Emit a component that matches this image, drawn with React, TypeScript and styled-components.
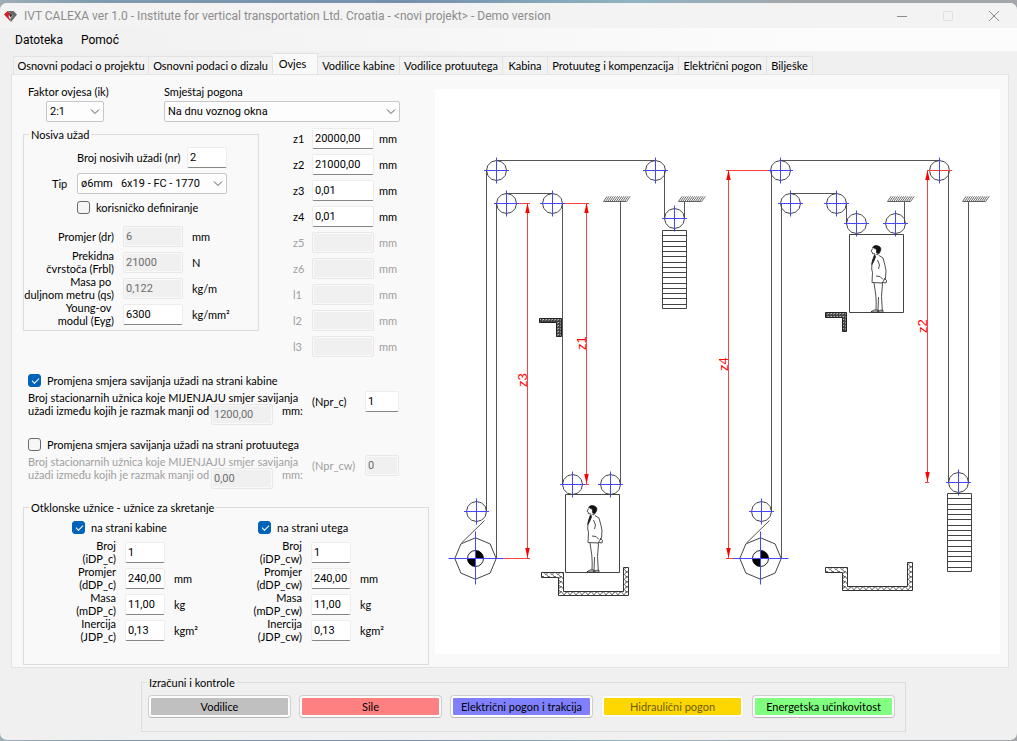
import React, { useState } from "react";
import styled, { createGlobalStyle } from "styled-components";

const GlobalStyle = createGlobalStyle`
  * { box-sizing: border-box; }
  html, body { margin: 0; }
  body {
    font: 11px/13px Lato, "Liberation Sans", Arial, sans-serif;
    color: #000;
    background: #3c5468;
  }
  button { font: inherit; color: inherit; }
  input, select { font: 11px/13px Roboto, "Liberation Sans", Arial, sans-serif; color: inherit; }
`;

const Desktop = styled.div`
  min-height: 100vh;
  display: flex;
  flex-direction: column;
  padding: 3px 0 1px;
  background: linear-gradient(90deg, #9fadb6, #7e9bb0 10%, #7590ab 40%, #8fb3c2 62%, #a3a7ac 78%, #a3a7ac);
`;

const Window = styled.main`
  flex: 1;
  display: flex;
  flex-direction: column;
  background: #f0f0f0;
  border-radius: 7px;
  overflow: hidden;
`;

const TitleBar = styled.header`
  display: flex;
  align-items: center;
  height: 25px;
  padding: 0 0 0 4px;
  background: #f3f3f3;
  color: #8c8c8c;
`;

const Title = styled.h1`
  flex: 1;
  margin: 0 0 0 7px;
  font: 12px/16px Roboto, sans-serif;
  white-space: nowrap;
`;

const CaptionButton = styled.button<{ $faded?: boolean }>`
  width: 46px;
  height: 25px;
  padding: 0;
  border: 0;
  background: none;
  color: ${(p) => (p.$faded ? "#dedede" : "#8a8a8a")};
  svg { display: block; margin: 0 auto; }
`;

const MenuBar = styled.nav`
  display: flex;
  align-items: center;
  gap: 18px;
  height: 23px;
  padding-left: 15px;
  background: linear-gradient(90deg, #f0f0f0, #fcfcfc 80%);
`;

const MenuItem = styled.button`
  padding: 0;
  border: 0;
  background: none;
  font: 12px/16px Roboto, sans-serif;
`;

const TabStrip = styled.div`
  display: flex;
  align-items: flex-end;
  height: 23px;
  padding-left: 13px;
`;

const Tab = styled.button<{ $active?: boolean; $width: number }>`
  width: ${(p) => p.$width}px;
  height: ${(p) => (p.$active ? 21 : 18)}px;
  padding: ${(p) => (p.$active ? "0 5px 2px 0" : "0")};
  border: 1px solid #e3e3e3;
  border-bottom: 0;
  border-left-width: ${(p) => (p.$active ? 0 : 1)}px;
  background: ${(p) => (p.$active ? "#f9f9f9" : "#f2f2f2")};
  white-space: nowrap;
  & + & { border-left: 0; }
`;

const TabPage = styled.section`
  display: flex;
  align-items: flex-start;
  margin: 0 8px 0 11px;
  border: 1px solid #e3e3e3;
  background: #f9f9f9;
`;

const Form = styled.form`
  flex: none;
  width: 423px;
  padding: 10px 6px 2px 11px;
`;

const Figure = styled.figure`
  flex: 1;
  margin: 14px 8px 12px 0;
  background: #fff;
  svg { display: block; width: 100%; height: auto; }
`;

const DriveRow = styled.div`
  display: grid;
  grid-template-columns: 136px 236px;
  height: 40px;
  padding-left: 5px;
`;

const StackField = styled.div<{ $indent?: number }>`
  display: grid;
  grid-template-rows: 16px 21px;
  > label { line-height: 14px; }
  > span { margin-left: ${(p) => p.$indent ?? 0}px; }
`;

const SelectWrap = styled.span`
  position: relative;
  display: block;
  width: fit-content;
  svg { position: absolute; right: 4px; top: 7px; pointer-events: none; }
`;

const Select = styled.select<{ $width: number }>`
  appearance: none;
  display: block;
  width: ${(p) => p.$width}px;
  height: 21px;
  padding: 0 3px;
  border: 1px solid #c8c8c8;
  border-radius: 2px;
  background: #fdfdfd;
`;

const Input = styled.input<{ $width: number }>`
  width: ${(p) => p.$width}px;
  height: 21px;
  padding: 0 2px;
  border: 1px solid #ececec;
  border-bottom-color: #868686;
  border-radius: 2px;
  background: #fff;
  &:disabled {
    border-color: #e8e8e8;
    background: #f0f0f0;
    box-shadow: inset 0 0 0 1px #f9f9f9;
    color: #6d6d6d;
  }
`;

const Group = styled.fieldset<{ $width?: number }>`
  width: ${(p) => (p.$width ? `${p.$width}px` : "auto")};
  min-width: 0;
  margin: 0;
  padding: 0;
  border: 1px solid #dcdcdc;
`;

const Legend = styled.legend`
  margin-left: 5px;
  padding: 0 2px;
`;

const RopeRow = styled.div`
  display: flex;
  gap: 34px;
`;

const RopeGroup = styled(Group)`
  height: 203px;
  margin-top: 3px;
`;

const RopeLine = styled.div`
  display: grid;
  grid-template-columns: 53px 1fr;
  align-items: center;
  height: 26px;
  > label:first-child { padding-left: 28px; }
`;

const CountLine = styled.div`
  display: grid;
  grid-template-columns: 110px 40px;
  align-items: center;
  height: 26px;
  padding-left: 53px;
  margin-top: 3px;
`;

const CheckLine = styled.div<{ $left?: number }>`
  display: flex;
  align-items: center;
  gap: 6px;
  height: 22px;
  padding-left: ${(p) => p.$left ?? 0}px;
`;

const CheckBox = styled.input`
  appearance: none;
  width: 13px;
  height: 13px;
  margin: 0;
  border: 1px solid #6a6a6a;
  border-radius: 3px;
  background: #f6f6f6;
  &:checked {
    border-color: #0062b8;
    background: #0062b8;
  }
  &:checked::after {
    content: "";
    display: block;
    width: 6px;
    height: 3px;
    margin: 3px 0 0 3px;
    border: solid #fff;
    border-width: 0 0 1px 1px;
    transform: rotate(-45deg);
  }
`;

const ParamList = styled.div<{ $label: number; $input: number }>`
  display: grid;
  grid-template-columns: ${(p) => p.$label}px ${(p) => p.$input}px 1fr;
  grid-auto-rows: 26px;
  align-items: center;
  column-gap: 9px;
  label { text-align: right; white-space: pre; }
`;

const RopeParams = styled(ParamList)`
  margin-top: 5px;
`;

const DeflectorParams = styled(ParamList)`
  margin-top: 1px;
`;

const DimensionList = styled.div`
  display: grid;
  grid-template-columns: 19px 62px auto;
  grid-auto-rows: 26px;
  align-items: center;
`;

const Unit = styled.span<{ $dim?: boolean }>`
  padding-left: 5px;
  color: ${(p) => (p.$dim ? "#a0a0a0" : "inherit")};
`;

const Label = styled.label<{ $dim?: boolean }>`
  color: ${(p) => (p.$dim ? "#a0a0a0" : "inherit")};
  white-space: nowrap;
`;

const BendBlock = styled.section`
  height: 64px;
  padding-left: 5px;
`;

const BendArea = styled.div`
  margin-top: 10px;
  height: 132px;
`;

const BendRow = styled.div<{ $dim?: boolean }>`
  display: grid;
  grid-template-columns: 284px 53px 34px;
  align-items: start;
  color: ${(p) => (p.$dim ? "#a0a0a0" : "inherit")};
  > label { line-height: 21px; }
`;

const BendLine = styled.div`
  display: grid;
  grid-template-columns: 183px 71px auto;
  height: 13px;
  white-space: nowrap;
`;

const DeflectorGroup = styled(Group)`
  height: 164px;
`;

const DeflectorColumns = styled.div`
  display: grid;
  grid-template-columns: 186px 1fr;
  margin-top: 2px;
`;

const Actions = styled(Group)`
  display: block;
  width: 765px;
  height: 56px;
  margin: 8px 0 8px 141px;
`;

const ActionRow = styled.div`
  display: grid;
  grid-template-columns: repeat(5, 1fr);
  gap: 8px;
  padding: 6px 10px 0 6px;
`;

const ActionButton = styled.button<{ $fill: string }>`
  height: 23px;
  padding: 2px;
  border: 1px solid #cfcfcf;
  border-bottom-color: #b8b8b8;
  border-radius: 4px;
  background: linear-gradient(${(p) => p.$fill}, ${(p) => p.$fill}) content-box, #fdfdfd;
  &:disabled { border-color: #ececec; color: #6b5a00; }
`;

const Chevron = () => (
  <svg width="10" height="7" viewBox="0 0 10 7" fill="none" stroke="#555" aria-hidden="true">
    <path d="M1 1.5 5 5.5 9 1.5" />
  </svg>
);

const Picker = ({ id, width, value }: { id: string; width: number; value: string }) => (
  <SelectWrap>
    <Select id={id} $width={width} defaultValue={value}>
      <option>{value}</option>
    </Select>
    <Chevron />
  </SelectWrap>
);

const Check = ({ id, text, on, left }: { id: string; text: string; on?: boolean; left?: number }) => (
  <CheckLine $left={left}>
    <CheckBox id={id} type="checkbox" defaultChecked={on} />
    <Label htmlFor={id}>{text}</Label>
  </CheckLine>
);

type Param = { id: string; label: string; value: string; unit?: string; off?: boolean };

const Params = ({ rows, width }: { rows: Param[]; width: number }) => (
  <>
    {rows.map((r) => (
      <React.Fragment key={r.id}>
        <label htmlFor={r.id}>{r.label}</label>
        <Input id={r.id} $width={width} defaultValue={r.value} disabled={r.off} />
        <span>{r.unit}</span>
      </React.Fragment>
    ))}
  </>
);

const ropeParams: Param[] = [
  { id: "dr", label: "Promjer (dr)", value: "6", unit: "mm", off: true },
  { id: "frbl", label: "Prekidna\nčvrstoča (Frbl)", value: "21000", unit: "N", off: true },
  { id: "qs", label: "Masa po\u00a0\nduljnom metru (qs)", value: "0,122", unit: "kg/m", off: true },
  { id: "eyg", label: "Young-ov\u00a0\nmodul (Eyg)", value: "6300", unit: "kg/mm²" },
];

const deflectorParams = (side: string): Param[] => [
  { id: `idp_${side}`, label: `Broj\n(iDP_${side})`, value: "1" },
  { id: `ddp_${side}`, label: `Promjer\n(dDP_${side})`, value: "240,00", unit: "mm" },
  { id: `mdp_${side}`, label: `Masa\n(mDP_${side})`, value: "11,00", unit: "kg" },
  { id: `jdp_${side}`, label: `Inercija\n(JDP_${side})`, value: "0,13", unit: "kgm²" },
];

const dimensions: [string, string][] = [
  ["z1", "20000,00"], ["z2", "21000,00"], ["z3", "0,01"], ["z4", "0,01"],
  ["z5", ""], ["z6", ""], ["l1", ""], ["l2", ""], ["l3", ""],
];

const tabs: [string, number][] = [
  ["Osnovni podaci o projektu", 136], ["Osnovni podaci o dizalu", 124], ["Ovjes", 45],
  ["Vodilice kabine", 82], ["Vodilice protuutega", 103], ["Kabina", 45],
  ["Protuuteg i kompenzacija", 131], ["Električni pogon", 88], ["Bilješke", 46],
];

const actions: [string, string, boolean][] = [
  ["Vodilice", "#c0c0c0", false], ["Sile", "#ff8080", false],
  ["Električni pogon i trakcija", "#8080ff", false], ["Hidraulični pogon", "#ffd700", true],
  ["Energetska učinkovitost", "#80ff80", false],
];

const ring = (x: number, y: number, r: number, n: number) =>
  Array.from({ length: n }, (_, i) => {
    const a = (i * 2 * Math.PI) / n;
    return `${(x + r * Math.cos(a)).toFixed(1)},${(y + r * Math.sin(a)).toFixed(1)}`;
  }).join(" ");

const Pulley = ({ x, y, axis = "#4646ff" }: { x: number; y: number; axis?: string }) => (
  <g>
    <polygon points={ring(x, y, 10, 12)} stroke="#444" />
    <path d={`M${x - 12.5} ${y}h25`} stroke={axis} />
    <path d={`M${x} ${y - 13}v26`} stroke="#4646ff" />
  </g>
);

const Machine = ({ x, y }: { x: number; y: number }) => (
  <g>
    <polygon points={ring(x, y, 20.7, 8)} stroke="#444" />
    <circle cx={x} cy={y} r="8" stroke="#222" />
    <path d={`M${x} ${y}v-8a8 8 0 0 1 8 8zM${x} ${y}v8a8 8 0 0 1 -8 -8z`} fill="#000" stroke="none" />
    <path d={`M${x - 27} ${y}h55M${x} ${y - 27}v53`} stroke="#4646ff" />
    <path d={`M${x - 14} ${y - 15.5}l23 -22.5`} stroke="#555" />
    <Pulley x={x + 1} y={y - 47} />
  </g>
);

const Weight = ({ x, y }: { x: number; y: number }) => (
  <path
    stroke="#444"
    d={`M${x} ${y}h24v78h-24z` + Array.from({ length: 14 }, (_, i) => `M${x} ${y + Math.round((i + 1) * 5.25)}h24`).join("")}
  />
);

const Anchor = ({ x, y }: { x: number; y: number }) => (
  <path
    stroke="#444"
    strokeWidth="0.8"
    d={`M${x} ${y}h23` + Array.from({ length: 12 }, (_, i) => `M${x + i * 2.1} ${y}l3.6 -5.2`).join("")}
  />
);

const Dimension = ({ x, top, bottom, label, labelY }: { x: number; top: number; bottom: number; label: string; labelY: number }) => (
  <g>
    <path d={`M${x} ${top}V${bottom}`} stroke="#ff4040" />
    <path d={`M${x} ${top}l2.2 10h-4.4zM${x} ${bottom}l2.2 -10h-4.4z`} fill="#f00" stroke="none" />
    <text x={x} y={labelY} transform={`rotate(-90 ${x} ${labelY})`} dy="-1" textAnchor="middle" fill="#f00" stroke="none" fontSize="13">
      {label}
    </text>
  </g>
);

const Passenger = () => (
  <g stroke="#222" strokeWidth="0.8">
    <path d="M588.6 507.5c1-1.8 3-2.2 5-1.7 2.300.6 3.600 2 3.200 4-.3 1.700-1.300 2.800-2.200 4.200l-2.200-1.500.2-2.500-1.500-1.500z" fill="#111" />
    <path d="M588.5 508.5l-1.300 2.800 1 .7.2 1.600 2.500.2M592 514l2.300 1" />
    <path d="M590.8 514.5l-2.300 6-.6 4 1.500-2.500 2.100-5z" fill="#111" />
    <path d="M590.5 515l-2.500 8-.3 6 .8 3.500-.5 10 10.500.5M595 515.500l4 2.500 2 7.500 1 5-.5 7.500-2.500 3.500-1 2M593.500 520l2 5-1 4M592 536l4 .5 3 3M600 538l2.500 2.500-.5 2.500-3-.5" />
    <path d="M590 543l1.800 12 .4 8-.2 7.500M594.500 557l-.5 14M598.500 543.500l-1 13 .8 14" />
    <path d="M587 571.800l3-1.800h4v2zM593.500 571.800l2.500-1.500h3v1.800z" />
  </g>
);

const Car = () => (
  <g>
    <path d="M565.5 494.5h54v78h-54z" stroke="#444" />
    <Passenger />
  </g>
);

const Pit = () => (
  <path
    fill="url(#concrete)"
    stroke="#333"
    d="M541.5 572.5h22v19h60v-24h5v28h-70v-18h-17z"
  />
);

const Scheme = () => (
  <svg viewBox="435 89 565 565" fill="none" fontFamily="Liberation Sans, Arial, sans-serif" role="img" aria-label="Shema ovjesa">
    <defs>
      <pattern id="concrete" width="6" height="5" patternUnits="userSpaceOnUse">
        <path d="M0 5l3-4 3 4M1 0l2 3" fill="none" stroke="#444" strokeWidth="0.8" />
      </pattern>
      <pattern id="slab" width="3" height="3" patternUnits="userSpaceOnUse">
        <rect width="3" height="3" fill="#444" />
        <path d="M0 2l1-1M2 2h1" stroke="#ddd" strokeWidth="0.8" />
      </pattern>
    </defs>

    <g stroke="#555">
      <path d="M496.5 160.5H655M486.5 170V512M664.5 170V218M506.5 193.5H552.5M496.5 203V558M562.5 203V484M620.5 202V484M684.5 202V218" />
      <path d="M780.5 160.5H939M771.5 170V512M948.5 170V482M790.5 193.5H836.5M781.5 203V558M846.5 203V224M904.5 202V224M968.5 202V482" />
    </g>
    <g stroke="#ff4040">
      <path d="M516 203.5H530M562 203.5H589M503 558.5H530M582 484.5H589" />
      <path d="M726 170.5H768M726 558.5H735M925 482.5H929" />
    </g>
    <Dimension x={527.5} top={203} bottom={558} label="z3" labelY={380} />
    <Dimension x={586.5} top={203} bottom={484} label="z1" labelY={343} />
    <Dimension x={728.5} top={170} bottom={558} label="z4" labelY={364} />
    <Dimension x={927.5} top={170} bottom={482} label="z2" labelY={326} />

    <Pulley x={496.5} y={170.5} />
    <Pulley x={655.5} y={170.5} />
    <Pulley x={506.5} y={203.5} />
    <Pulley x={552.5} y={203.5} />
    <Pulley x={674.5} y={218.5} />
    <Pulley x={572.5} y={484.5} />
    <Pulley x={610.5} y={484.5} />
    <Machine x={475.5} y={558.5} />
    <Anchor x={603.5} y={201.5} />
    <Anchor x={678.5} y={201.5} />
    <Weight x={662.5} y={230.5} />
    <path d="M539.5 318.5h22v18h-5v-14h-17z" fill="url(#slab)" stroke="#222" />
    <Car />
    <Pit />

    <Pulley x={780.5} y={170.5} />
    <Pulley x={939.5} y={170.5} axis="#ff4040" />
    <Pulley x={790.5} y={203.5} />
    <Pulley x={836.5} y={203.5} />
    <Pulley x={856.5} y={223.5} />
    <Pulley x={895.5} y={223.5} />
    <Pulley x={958.5} y={482.5} />
    <Machine x={760.5} y={558.5} />
    <Anchor x={887.5} y={201.5} />
    <Anchor x={962.5} y={201.5} />
    <Weight x={947.5} y={493.5} />
    <path d="M825.5 312.5h21v19h-4v-14h-17z" fill="url(#slab)" stroke="#222" />
    <g transform="translate(284 -260)"><Car /></g>
    <g transform="translate(284 -5)"><Pit /></g>
  </svg>
);

const Bend = ({ side, on, title, limit, count }: { side: string; on: boolean; title: string; limit: string; count: string }) => (
  <BendBlock>
    <Check id={`bend_${side}`} text={title} on={on} />
    <BendRow $dim={!on}>
      <div>
        <BendLine>Broj stacionarnih užnica koje MIJENJAJU smjer savijanja</BendLine>
        <BendLine>
          <label htmlFor={`limit_${side}`}>užadi između kojih je razmak manji od</label>
          <Input id={`limit_${side}`} $width={62} defaultValue={limit} disabled />
          <span>mm:</span>
        </BendLine>
      </div>
      <label htmlFor={`npr_${side}`}>(Npr_{side})</label>
      <Input id={`npr_${side}`} $width={34} defaultValue={count} disabled={!on} />
    </BendRow>
  </BendBlock>
);

export default function App() {
  const [active, setActive] = useState(2);
  return (
    <Desktop>
      <GlobalStyle />
      <Window>
        <TitleBar>
          <svg width="13" height="12" viewBox="0 0 13 12" aria-hidden="true">
            <path d="M0 4.5 3.5 1 6.5 3.5 4.5 6 7 12z" fill="#d5202c" />
            <path d="M3.5 1h6L13 4.5 7 12 6 9 9 5.5 6.5 3.5z" fill="#6a6a6a" />
            <path d="M5 4.5 7 3.5 8.5 5.5 6.5 7.5z" fill="#333" />
          </svg>
          <Title>IVT CALEXA ver 1.0 - Institute for vertical transportation Ltd. Croatia - &lt;novi projekt&gt; - Demo version</Title>
          <CaptionButton type="button" aria-label="Minimize">
            <svg width="10" height="10" stroke="currentColor"><path d="M0 5.5h10" /></svg>
          </CaptionButton>
          <CaptionButton type="button" aria-label="Maximize" $faded disabled>
            <svg width="10" height="10" fill="none" stroke="currentColor"><rect x="0.5" y="0.5" width="9" height="9" rx="1" /></svg>
          </CaptionButton>
          <CaptionButton type="button" aria-label="Close">
            <svg width="10" height="10" stroke="currentColor"><path d="M0 0l10 10M10 0L0 10" /></svg>
          </CaptionButton>
        </TitleBar>
        <MenuBar>
          <MenuItem type="button">Datoteka</MenuItem>
          <MenuItem type="button">Pomoć</MenuItem>
        </MenuBar>
        <TabStrip role="tablist">
          {tabs.map(([name, width], i) => (
            <Tab key={name} type="button" role="tab" aria-selected={i === active} $active={i === active} $width={width} onClick={() => setActive(i)}>
              {name}
            </Tab>
          ))}
        </TabStrip>
        <TabPage>
          <Form>
            <DriveRow>
              <StackField $indent={18}>
                <Label htmlFor="ik">Faktor ovjesa (ik)</Label>
                <Picker id="ik" width={58} value="2:1" />
              </StackField>
              <StackField>
                <Label htmlFor="drive">Smještaj pogona</Label>
                <Picker id="drive" width={236} value="Na dnu voznog okna" />
              </StackField>
            </DriveRow>
            <RopeRow>
              <RopeGroup $width={236}>
                <Legend>Nosiva užad</Legend>
                <CountLine>
                  <Label htmlFor="nr">Broj nosivih užadi (nr)</Label>
                  <Input id="nr" $width={40} defaultValue="2" />
                </CountLine>
                <RopeLine>
                  <Label htmlFor="tip">Tip</Label>
                  <Picker id="tip" width={150} value={"ø6mm\u00a0\u00a0\u00a06x19 - FC - 1770"} />
                </RopeLine>
                <Check id="custom" text="korisničko definiranje" left={53} />
                <RopeParams $label={90} $input={60}>
                  <Params rows={ropeParams} width={60} />
                </RopeParams>
              </RopeGroup>
              <DimensionList>
                {dimensions.map(([name, value]) => (
                  <React.Fragment key={name}>
                    <Label htmlFor={name} $dim={!value}>{name}</Label>
                    <Input id={name} $width={62} defaultValue={value} disabled={!value} />
                    <Unit $dim={!value}>mm</Unit>
                  </React.Fragment>
                ))}
              </DimensionList>
            </RopeRow>
            <BendArea>
              <Bend side="c" on title="Promjena smjera savijanja užadi na strani kabine" limit="1200,00" count="1" />
              <Bend side="cw" on={false} title="Promjena smjera savijanja užadi na strani protuutega" limit="0,00" count="0" />
            </BendArea>
            <DeflectorGroup>
              <Legend>Otklonske užnice - užnice za skretanje</Legend>
              <DeflectorColumns>
                {[["c", "na strani kabine"], ["cw", "na strani utega"]].map(([side, title]) => (
                  <div key={side}>
                    <Check id={`deflect_${side}`} text={title} on left={48} />
                    <DeflectorParams $label={92} $input={40}>
                      <Params rows={deflectorParams(side)} width={40} />
                    </DeflectorParams>
                  </div>
                ))}
              </DeflectorColumns>
            </DeflectorGroup>
          </Form>
          <Figure><Scheme /></Figure>
        </TabPage>
        <Actions>
          <Legend>Izračuni i kontrole</Legend>
          <ActionRow>
            {actions.map(([name, fill, off]) => (
              <ActionButton key={name} type="button" $fill={fill} disabled={off}>{name}</ActionButton>
            ))}
          </ActionRow>
        </Actions>
      </Window>
    </Desktop>
  );
}
